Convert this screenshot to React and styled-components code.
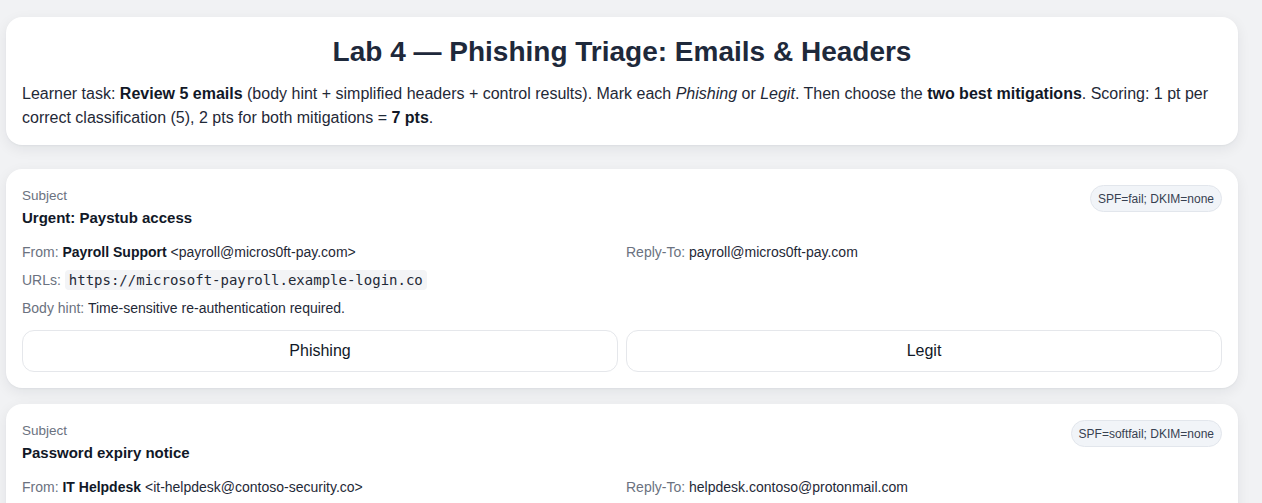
import React, { useState } from "react";
import styled, { createGlobalStyle } from "styled-components";

const GlobalStyle = createGlobalStyle`
  * { box-sizing: border-box; }
  html, body { margin: 0; padding: 0; background: #f1f2f4; }
  body {
    font-family: "Liberation Sans", Arial, sans-serif;
    color: #1f2937;
    -webkit-font-smoothing: antialiased;
  }
`;

const Page = styled.main`
  padding: 17px 24px 40px 6px;
  display: flex;
  flex-direction: column;
  gap: 24px;
`;

const Card = styled.section`
  background: #ffffff;
  border-radius: 16px;
  padding: ${(p) => (p.$header ? "17px 16px 15px" : "17px 16px 16px")};
  box-shadow: 0 1px 2px rgba(15, 23, 42, 0.04), 0 4px 14px rgba(15, 23, 42, 0.07);
`;

const Title = styled.h1`
  margin: 0 0 12px;
  text-align: center;
  font-size: 28px;
  line-height: 36px;
  font-weight: 700;
  color: #1e293b;
`;

const Intro = styled.p`
  margin: 0;
  font-size: 16px;
  line-height: 24px;
  color: #1f2937;
`;

const EmailList = styled.div`
  display: flex;
  flex-direction: column;
  gap: 16px;
`;

const EmailHead = styled.div`
  display: flex;
  justify-content: space-between;
  align-items: flex-start;
  gap: 12px;
`;

const SubjectLabel = styled.div`
  font-size: 13.5px;
  line-height: 20px;
  color: #6b7280;
`;

const SubjectText = styled.div`
  margin-top: 1px;
  font-size: 15px;
  line-height: 22px;
  font-weight: 700;
  color: #111827;
`;

const Badge = styled.span`
  flex-shrink: 0;
  display: inline-flex;
  align-items: center;
  height: 27px;
  margin-top: -1px;
  padding: 0 7px;
  border-radius: 999px;
  background: #f1f4f8;
  border: 1px solid #e2e6ec;
  font-size: 12px;
  color: #374151;
  white-space: nowrap;
`;

const MetaGrid = styled.div`
  margin-top: 13px;
  display: grid;
  grid-template-columns: 1fr 1fr;
  column-gap: 8px;
  row-gap: 8px;
`;

const Meta = styled.div`
  grid-column: ${(p) => (p.$full ? "1 / -1" : "auto")};
  font-size: 14px;
  line-height: 20px;
  color: #1f2937;
`;

const MetaLabel = styled.span`
  color: #6b7280;
`;

const Strong = styled.strong`
  font-weight: 700;
  color: #111827;
`;

const Code = styled.code`
  font-family: "DejaVu Sans Mono", "Liberation Mono", monospace;
  font-size: 14px;
  background: #f3f4f6;
  border-radius: 4px;
  padding: 2px 4px;
  color: #1f2937;
`;

const Actions = styled.div`
  margin-top: 12px;
  display: grid;
  grid-template-columns: 1fr 1fr;
  gap: 8px;
`;

const ChoiceButton = styled.button`
  height: 42px;
  border-radius: 12px;
  border: 1px solid ${(p) => (p.$active ? "#94a3b8" : "#e5e7eb")};
  background: ${(p) => (p.$active ? "#f1f5f9" : "#ffffff")};
  font-family: inherit;
  font-size: 16px;
  color: #111827;
  cursor: pointer;
`;

const emails = [
  {
    subject: "Urgent: Paystub access",
    auth: "SPF=fail; DKIM=none",
    fromName: "Payroll Support",
    fromAddr: "payroll@micros0ft-pay.com",
    replyTo: "payroll@micros0ft-pay.com",
    url: "https://microsoft-payroll.example-login.co",
    hint: "Time-sensitive re-authentication required.",
  },
  {
    subject: "Password expiry notice",
    auth: "SPF=softfail; DKIM=none",
    fromName: "IT Helpdesk",
    fromAddr: "it-helpdesk@contoso-security.co",
    replyTo: "helpdesk.contoso@protonmail.com",
    url: "https://contoso-security.co/reset",
    hint: "Your password expires today. Click to keep it.",
  },
  {
    subject: "Q3 all-hands agenda",
    auth: "SPF=pass; DKIM=pass",
    fromName: "Internal Comms",
    fromAddr: "comms@contoso.com",
    replyTo: "comms@contoso.com",
    url: "https://intranet.contoso.com/allhands",
    hint: "Agenda attached; no action required.",
  },
  {
    subject: "Invoice #4471 overdue",
    auth: "SPF=fail; DKIM=fail",
    fromName: "Accounts Receivable",
    fromAddr: "billing@vendor-invoices.net",
    replyTo: "ar-team@gmail.com",
    url: "https://vendor-invoices.net/pay",
    hint: "Wire payment to new bank details.",
  },
  {
    subject: "Benefits enrollment reminder",
    auth: "SPF=pass; DKIM=pass",
    fromName: "HR Team",
    fromAddr: "hr@contoso.com",
    replyTo: "hr@contoso.com",
    url: "https://benefits.contoso.com",
    hint: "Open enrollment closes Friday.",
  },
];

function EmailCard({ email }) {
  const [choice, setChoice] = useState(null);
  return (
    <Card>
      <EmailHead>
        <div>
          <SubjectLabel>Subject</SubjectLabel>
          <SubjectText>{email.subject}</SubjectText>
        </div>
        <Badge>{email.auth}</Badge>
      </EmailHead>
      <MetaGrid>
        <Meta>
          <MetaLabel>From: </MetaLabel>
          <Strong>{email.fromName}</Strong> &lt;{email.fromAddr}&gt;
        </Meta>
        <Meta>
          <MetaLabel>Reply-To: </MetaLabel>
          {email.replyTo}
        </Meta>
        <Meta $full>
          <MetaLabel>URLs: </MetaLabel>
          <Code>{email.url}</Code>
        </Meta>
        <Meta $full>
          <MetaLabel>Body hint: </MetaLabel>
          {email.hint}
        </Meta>
      </MetaGrid>
      <Actions>
        <ChoiceButton $active={choice === "p"} onClick={() => setChoice("p")}>
          Phishing
        </ChoiceButton>
        <ChoiceButton $active={choice === "l"} onClick={() => setChoice("l")}>
          Legit
        </ChoiceButton>
      </Actions>
    </Card>
  );
}

export default function App() {
  return (
    <>
      <GlobalStyle />
      <Page>
        <Card $header>
          <Title>Lab 4 — Phishing Triage: Emails &amp; Headers</Title>
          <Intro>
            Learner task: <Strong>Review 5 emails</Strong> (body hint + simplified headers +
            control results). Mark each <em>Phishing</em> or <em>Legit</em>. Then choose the{" "}
            <Strong>two best mitigations</Strong>. Scoring: 1 pt per correct classification (5), 2
            pts for both mitigations = <Strong>7 pts</Strong>.
          </Intro>
        </Card>
        <EmailList>
          {emails.map((e) => (
            <EmailCard key={e.subject} email={e} />
          ))}
        </EmailList>
      </Page>
    </>
  );
}
